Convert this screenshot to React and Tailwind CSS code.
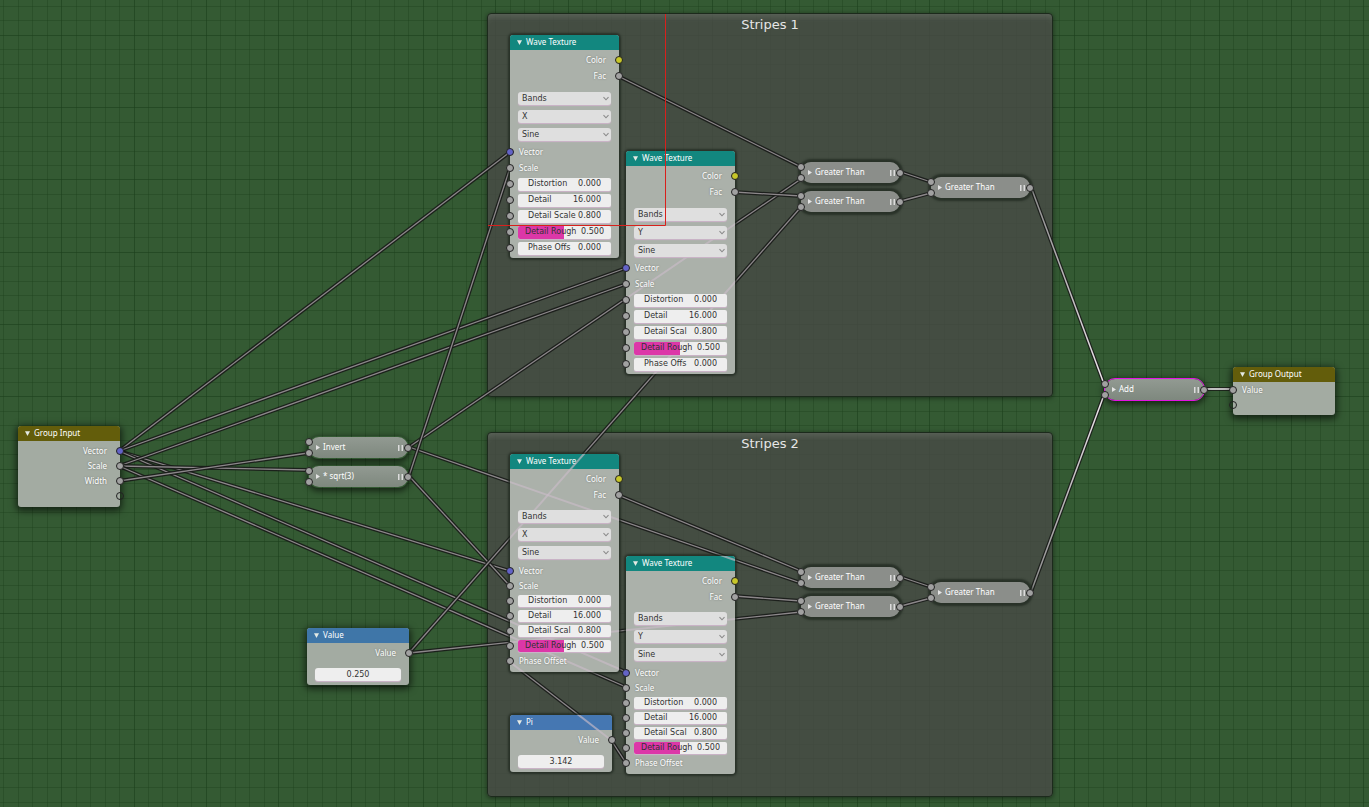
import React from "react";

const GRAY = "#a1a1a1";
const VECTOR = "#6363c7";
const COLOR = "#c7c729";

const links = [
  [119, 451, 510, 152],
  [119, 451, 626, 268],
  [119, 451, 510, 571],
  [119, 451, 626, 672],
  [119, 466, 626, 284],
  [119, 466, 308, 470],
  [119, 466, 626, 687],
  [119, 481, 308, 453],
  [409, 447, 801, 179],
  [409, 447, 801, 583],
  [409, 476, 510, 168],
  [409, 476, 510, 586],
  [409, 653, 801, 207],
  [409, 653, 801, 612],
  [618, 76, 801, 167],
  [734, 192, 801, 196],
  [618, 495, 801, 571],
  [734, 596, 801, 601],
  [901, 172, 931, 182],
  [901, 201, 931, 193],
  [901, 577, 931, 587],
  [901, 606, 931, 598],
  [611, 740, 510, 662],
  [611, 740, 626, 763],
];

const activeLinks = [
  { id: "a", at: [1031, 187, 1104, 384], from: "#8a8a8a" },
  { id: "b", at: [1031, 592, 1104, 395], from: "#8a8a8a" },
  { id: "c", at: [1204, 389, 1233, 389], from: "#ffffff" },
];

function Grid() {
  const cols = Array.from({ length: 180 }, (_, i) => i - 4);
  return (
    <svg className="absolute inset-0 w-full h-full" aria-hidden="true">
      {cols.map((i) => {
        const x = Math.round(61.2 + (i - 4) * 14.467) + 0.5;
        const y = Math.round(34.8 + (i - 3) * 14.467) + 0.5;
        const mx = (i - 4) % 5 === 0;
        const my = (i - 3) % 5 === 0;
        return (
          <g key={i} stroke="#1d3f1d">
            <line x1={x} x2={x} y1="0" y2="100%" strokeOpacity={mx ? 0.6 : 0.36} />
            <line x1="0" x2="100%" y1={y} y2={y} strokeOpacity={my ? 0.6 : 0.36} />
          </g>
        );
      })}
    </svg>
  );
}

function Links() {
  return (
    <svg className="absolute inset-0 w-full h-full" aria-hidden="true">
      {links.map(([x1, y1, x2, y2], i) => (
        <g key={i}>
          <line x1={x1} y1={y1} x2={x2} y2={y2} stroke="#181b18" strokeWidth="3.8" strokeOpacity="0.9" />
          <line x1={x1} y1={y1} x2={x2} y2={y2} stroke="#8c878a" strokeWidth="1.3" />
        </g>
      ))}
      {activeLinks.map(({ id, at: [x1, y1, x2, y2], from }) => (
        <g key={id}>
          <linearGradient id={id} gradientUnits="userSpaceOnUse" x1={x1} y1={y1} x2={x2} y2={y2 + 1}>
            <stop offset="0" stopColor={from} />
            <stop offset="1" stopColor="#f0e8ee" />
          </linearGradient>
          <line x1={x1} y1={y1} x2={x2} y2={y2} stroke="#181b18" strokeWidth="3.8" strokeOpacity="0.9" />
          <line x1={x1} y1={y1} x2={x2} y2={y2} stroke={`url(#${id})`} strokeWidth="1.5" />
        </g>
      ))}
    </svg>
  );
}

/* Links that run behind a node stay faintly visible on its body. */
function GhostLinks({ x, y }) {
  return (
    <svg className="absolute inset-0 w-full h-full overflow-hidden" aria-hidden="true">
      <g transform={`translate(${-x} ${-y})`} stroke="#c9bcc8" strokeWidth="2" strokeOpacity="0.65">
        {links.map(([x1, y1, x2, y2], i) => (
          <line key={i} x1={x1} y1={y1} x2={x2} y2={y2} />
        ))}
      </g>
    </svg>
  );
}

function Socket({ side, color = GRAY }) {
  return (
    <span
      className={`absolute top-1/2 -translate-y-1/2 size-2 rounded-full border border-[#222] ${
        side === "in" ? "-left-1" : "-right-1"
      }`}
      style={{ backgroundColor: color }}
    />
  );
}

function Row({ side, color, label, h = "h-4" }) {
  return (
    <div
      className={`relative flex items-center pl-[9px] pr-[13px] font-['Noto_Sans',sans-serif] text-[8px] text-white [text-shadow:0_0_2px_rgba(0,0,0,0.35)] ${h} ${
        side === "out" ? "justify-end" : ""
      }`}
    >
      <Socket side={side} color={color} />
      {label}
    </div>
  );
}

function Select({ name, value, options }) {
  return (
    <div className="grid grid-cols-1 items-center h-[18px] px-2">
      <select
        aria-label={name}
        defaultValue={value}
        className="[grid-area:1/1] appearance-none w-full h-[13px] rounded-[3px] bg-[#dfdfdf] pl-1 text-[8px] leading-[14px] text-[#333] shadow-[0_1px_1px_#cdb4c9]"
      >
        {options.map((o) => (
          <option key={o}>{o}</option>
        ))}
      </select>
      <svg
        className="[grid-area:1/1] justify-self-end mr-[2px] w-[6px] h-[5px] pointer-events-none"
        viewBox="0 0 6 5"
        fill="none"
        stroke="#8a8a8a"
        strokeWidth="1.1"
      >
        <path d="M0.5 1.2 L3 3.8 L5.5 1.2" />
      </svg>
    </div>
  );
}

function Field({ label, value, fill, compact }) {
  return (
    <div className={`relative flex items-center px-2 ${compact ? "h-[15px]" : "h-4"}`}>
      <Socket side="in" />
      <label
        className={`relative flex items-center justify-between w-full overflow-hidden rounded-[2px] bg-[#eeeeee] text-[8px] leading-3 text-[#333] shadow-[0_1px_1px_#cdb4c9] ${
          compact ? "h-3" : "h-[13px]"
        } ${fill ? "px-[7px]" : "px-[10px]"}`}
      >
        {fill && <span className="absolute inset-y-0 left-0 bg-[#dc37a8]" style={{ width: `${fill}%` }} />}
        <span className="relative whitespace-nowrap">{label}</span>
        <input defaultValue={value} className="relative w-7 min-w-0 h-3 text-right outline-none" />
      </label>
    </div>
  );
}

function Header({ title, className }) {
  return (
    <div
      className={`relative flex items-center gap-1 h-[15px] pl-[7px] pb-0.5 rounded-t-[3px] font-['Noto_Sans',sans-serif] text-[8px] leading-3 text-white ${className}`}
    >
      <button aria-label={`Collapse ${title}`} className="flex pt-0.5">
        <svg className="w-[5px] h-[5px]" viewBox="0 0 5 5" fill="#e4eae4">
          <path d="M0 0.3 H5 L2.5 5 Z" />
        </svg>
      </button>
      <h3>{title}</h3>
    </div>
  );
}

function Node({ x, y, title, head, width, className, children }) {
  return (
    <section
      className={`absolute rounded-[3px] ${width} ${className}`}
      style={{ left: x, top: y }}
    >
      <Header title={title} className={head} />
      <GhostLinks x={x} y={y} />
      <div className="relative">{children}</div>
    </section>
  );
}

const framed = "bg-[#abb1aa] shadow-[0_0_2px_2px_rgba(30,38,30,0.7)]";
const floating = "bg-[#a3aba2] shadow-[0_2px_7px_2px_rgba(0,0,0,0.6)]";

function WaveTexture({ x, y, axis, scaleLabel = "Detail Scal", compact }) {
  const h = compact ? "h-[15px]" : "h-4";
  return (
    <Node x={x} y={y} title="Wave Texture" head="bg-[#12877f]" width="w-[109px]" className={framed}>
      <div className={compact ? "pt-0.5 pb-1" : "pt-0.5 pb-0.5"}>
        <Row side="out" label="Color" color={COLOR} />
        <Row side="out" label="Fac" />
        <div className={compact ? "pt-1 pb-0.5" : "pt-[5px] pb-px"}>
          <Select name="Wave type" value="Bands" options={["Bands", "Rings"]} />
          <Select name="Direction" value={axis} options={["X", "Y", "Z"]} />
          <Select name="Profile" value="Sine" options={["Sine", "Saw"]} />
        </div>
        <Row side="in" label="Vector" color={VECTOR} h={h} />
        <Row side="in" label="Scale" h={h} />
        <Field label="Distortion" value="0.000" compact={compact} />
        <Field label="Detail" value="16.000" compact={compact} />
        <Field label={scaleLabel} value="0.800" compact={compact} />
        <Field label="Detail Rough" value="0.500" fill={49} compact={compact} />
        {compact ? (
          <Row side="in" label="Phase Offset" h={h} />
        ) : (
          <Field label="Phase Offs" value="0.000" />
        )}
      </div>
    </Node>
  );
}

function ValueNode({ x, y, title, value, head, className }) {
  return (
    <Node x={x} y={y} title={title} head={head} width="w-[102px]" className={className}>
      <div className="pt-0.5 pb-1">
        <Row side="out" label="Value" />
        <div className="pt-[7px] px-2">
          <input
            aria-label={title}
            defaultValue={value}
            className="block w-full h-[13px] rounded-[3px] bg-[#eeeeee] text-center text-[8px] text-[#333] shadow-[0_1px_1px_#cdb4c9]"
          />
        </div>
      </div>
    </Node>
  );
}

function MathNode({ x, y, label, look = "border-transparent bg-[#8b8e8a] shadow-[0_0_2px_2px_rgba(30,38,30,0.7)]" }) {
  return (
    <section
      className={`absolute flex items-center w-[101px] h-[23px] pr-[5px] rounded-[11px] border bg-clip-padding font-['Noto_Sans',sans-serif] text-[8px] leading-3 text-white ${look}`}
      style={{ left: x, top: y }}
    >
      <div className="flex flex-col justify-between h-full py-px -ml-1">
        <span className="size-2 rounded-full border border-[#222] bg-[#a1a1a1]" />
        <span className="size-2 rounded-full border border-[#222] bg-[#a1a1a1]" />
      </div>
      <Socket side="out" />
      <button aria-label={`Expand ${label}`} className="flex pl-[3px]">
        <svg className="w-1 h-[5px]" viewBox="0 0 4 5" fill="#e4e4e4">
          <path d="M0 0 L4 2.5 L0 5 Z" />
        </svg>
      </button>
      <h3 className="pl-[3px] pb-0.5 whitespace-nowrap">{label}</h3>
      <svg className="ml-auto w-[5px] h-[6px]" viewBox="0 0 5 6" fill="#dcdcdc">
        <path d="M0 0 H1.5 V6 H0 Z M3.5 0 H5 V6 H3.5 Z" />
      </svg>
    </section>
  );
}

const loose = "border-transparent bg-linear-to-b from-[#929a92] to-[#7e887e] shadow-[0_2px_6px_1px_rgba(0,0,0,0.6)]";
const active = "border-[#e312e3] bg-linear-to-b from-[#929a92] to-[#7e887e] shadow-[0_2px_6px_1px_rgba(0,0,0,0.6)]";

function Frame({ title, y, height }) {
  return (
    <section
      className={`absolute left-[487px] w-[566px] rounded-[4px] border border-[#1c2a1c] bg-[#494a46]/80 shadow-[0_1px_5px_rgba(0,0,0,0.5),inset_0_6px_6px_-3px_rgba(255,255,255,0.12)] ${height}`}
      style={{ top: y }}
    >
      <h2 className="pt-[3px] text-center text-[13px] leading-4 text-[#e6e6e6]">{title}</h2>
    </section>
  );
}

export default function App() {
  return (
    <main className="relative w-full min-h-screen overflow-hidden bg-[#345a33] font-['DejaVu_Sans',sans-serif]">
      <Grid />
      <Frame title="Stripes 1" y={13} height="h-[384px]" />
      <Frame title="Stripes 2" y={432} height="h-[365px]" />
      <Links />

      <Node x={18} y={426} title="Group Input" head="bg-[#635d0b]" width="w-[102px]" className={floating}>
        <div className="pt-0.5 pb-1">
          <Row side="out" label="Vector" color={VECTOR} h="h-[15px]" />
          <Row side="out" label="Scale" h="h-[15px]" />
          <Row side="out" label="Width" h="h-[15px]" />
          <Row side="out" color="transparent" h="h-[15px]" />
        </div>
      </Node>

      <MathNode x={308} y={436} label="Invert" look={loose} />
      <MathNode x={308} y={465} label="* sqrt(3)" look={loose} />
      <ValueNode x={307} y={628} title="Value" value="0.250" head="bg-[#3f76a8]" className={floating} />

      <WaveTexture x={510} y={35} axis="X" scaleLabel="Detail Scale" />
      <WaveTexture x={626} y={151} axis="Y" />
      <WaveTexture x={510} y={454} axis="X" compact />
      <WaveTexture x={626} y={556} axis="Y" compact />
      <ValueNode x={510} y={715} title="Pi" value="3.142" head="bg-[#4577b2]" className={framed} />

      <MathNode x={800} y={161} label="Greater Than" />
      <MathNode x={800} y={190} label="Greater Than" />
      <MathNode x={930} y={176} label="Greater Than" />
      <MathNode x={800} y={566} label="Greater Than" />
      <MathNode x={800} y={595} label="Greater Than" />
      <MathNode x={930} y={581} label="Greater Than" />
      <MathNode x={1104} y={378} label="Add" look={active} />

      <Node x={1233} y={367} title="Group Output" head="bg-[#635d0b]" width="w-[102px]" className={floating}>
        <div className="pb-[3px]">
          <Row side="in" label="Value" h="h-[15px]" />
          <Row side="in" color="transparent" h="h-[15px]" />
        </div>
      </Node>

      {/* Red guide over the first frame */}
      <svg className="absolute inset-0 w-full h-full pointer-events-none" aria-hidden="true">
        <path d="M665.5 14 V225.5 H488" fill="none" stroke="#d8201c" />
      </svg>
    </main>
  );
}
